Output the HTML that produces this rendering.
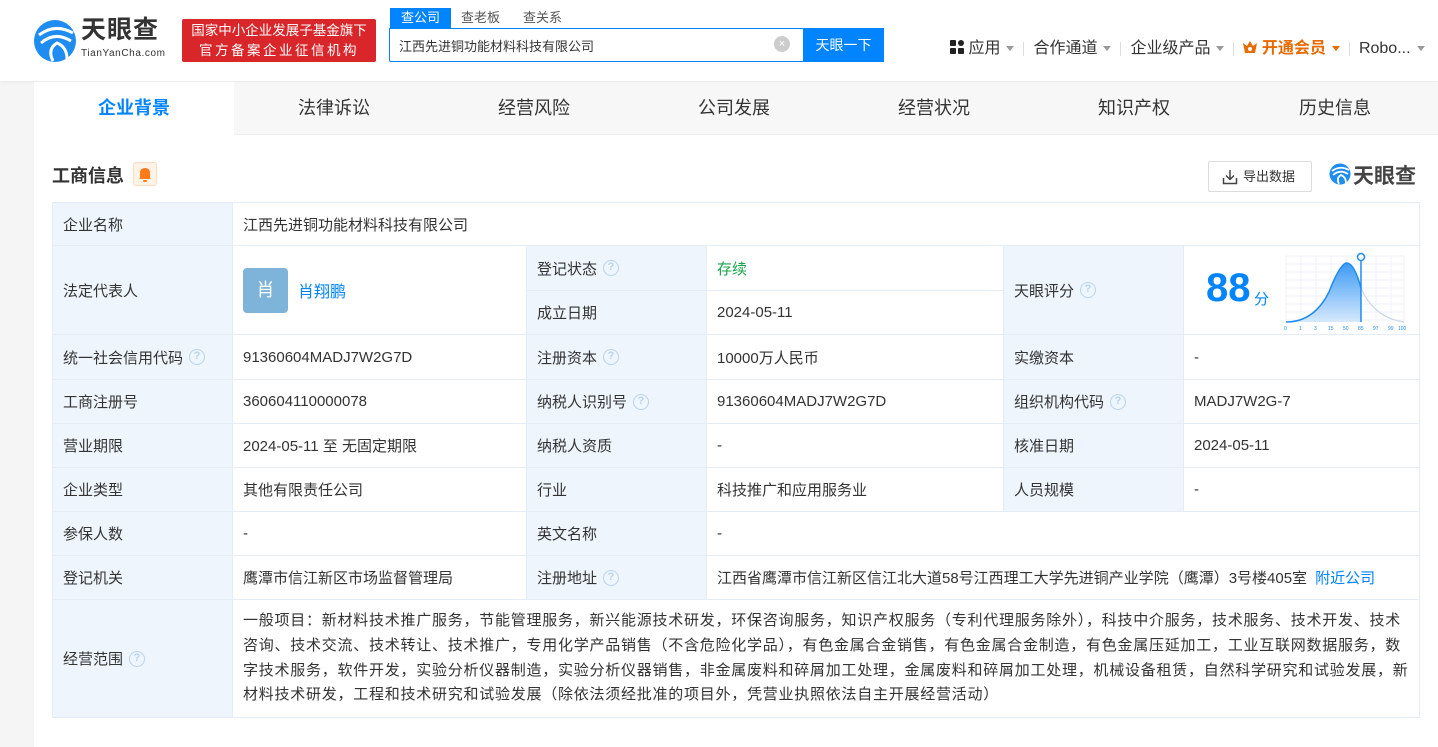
<!DOCTYPE html>
<html><head><meta charset="utf-8"><style>
*{margin:0;padding:0;box-sizing:border-box}
body{width:1438px;height:747px;overflow:hidden;background:#f5f5f6;font-family:"Liberation Sans","Noto Sans CJK SC",sans-serif;color:#333;position:relative}
.hdr{position:absolute;left:0;top:0;width:1438px;height:81px;background:#fff;box-shadow:0 1px 4px rgba(0,0,0,.06)}
.a{position:absolute}
.main{position:absolute;left:34px;top:82px;width:1404px;height:665px;background:#fff}
.tabs{position:absolute;left:34px;top:82px;width:1404px;height:53px;background:#f7f7f7;border-bottom:1px solid #eee}
.tab{position:absolute;top:82px;height:53px;line-height:52px;font-size:18px;color:#333;text-align:center;width:200px}
.c{position:absolute;border-right:1px solid #e4ecf5;border-bottom:1px solid #e4ecf5;font-size:15px;color:#333;display:flex;align-items:center;padding-left:10px;background:#fff}
.l{background:#eef5fc}
.q{display:inline-block;width:16px;height:16px;border:1.5px solid #b9d3ec;border-radius:50%;color:#b9d3ec;font-size:11px;line-height:13px;text-align:center;margin-left:6px;font-weight:bold}
.nav{font-size:16px;color:#333}
.tri{display:inline-block;width:0;height:0;border-left:4.5px solid transparent;border-right:4.5px solid transparent;border-top:5px solid #999;margin-left:6px;vertical-align:middle}
.sep{display:inline-block;width:1px;height:14px;background:#ddd;margin:0 9px;vertical-align:middle}
</style></head><body>
<div class="hdr"></div>
<svg class="a" style="left:33px;top:19px" width="44" height="44" viewBox="0 0 44 44">
<circle cx="22" cy="22" r="21" fill="#1e8cf0"/>
<path d="M6 16 Q22 4 40 14" stroke="#fff" stroke-width="3" fill="none"/>
<path d="M8 24 Q22 12 38 22" stroke="#fff" stroke-width="3" fill="none"/>
<path d="M20 42 Q14 30 24 24 Q34 28 34 40" stroke="#fff" stroke-width="3" fill="none"/>
</svg>
<div class="a" style="left:81px;top:15px;font-size:25px;line-height:30px;font-weight:bold;color:#333;letter-spacing:1px">天眼查</div>
<div class="a" style="left:81px;top:48px;font-size:10px;color:#333;letter-spacing:.6px">TianYanCha.com</div>
<div class="a" style="left:182px;top:19px;width:194px;height:43px;background:#d8262b;border-radius:2px;color:#fff;font-size:13.5px;line-height:20px;text-align:center;padding-top:2px">国家中小企业发展子基金旗下<br><span style="letter-spacing:2.5px">官方备案企业征信机构</span></div>
<div class="a" style="left:390px;top:8px;width:61px;height:20px;background:#0084ff;color:#fff;font-size:13px;text-align:center;line-height:20px">查公司</div>
<div class="a" style="left:461px;top:8px;font-size:13px;color:#555;line-height:20px">查老板</div>
<div class="a" style="left:523px;top:8px;font-size:13px;color:#555;line-height:20px">查关系</div>
<div class="a" style="left:389px;top:28px;width:495px;height:34px;border:1px solid #0084ff;border-radius:0 2px 2px 2px;background:#fff"></div>
<div class="a" style="left:399px;top:36px;font-size:13px;color:#333">江西先进铜功能材料科技有限公司</div>
<div class="a" style="left:774px;top:36px;width:16px;height:16px;border-radius:50%;background:#ccc;color:#fff;font-size:11px;text-align:center;line-height:16px">×</div>
<div class="a" style="left:803px;top:28px;width:81px;height:34px;background:#0084ff;color:#fff;font-size:14px;text-align:center;line-height:34px">天眼一下</div>
<div class="a nav" style="left:950px;top:34px;white-space:nowrap">
<svg width="14" height="14" viewBox="0 0 14 14" style="vertical-align:-1px"><rect x="0" y="0" width="6" height="6" rx="1" fill="#222"/><rect x="8" y="0" width="6" height="6" rx="3" fill="#222"/><rect x="0" y="8" width="6" height="6" rx="1" fill="#222"/><rect x="8" y="8" width="6" height="6" rx="1" fill="#222"/></svg>
应用<span class="tri"></span><span class="sep"></span>合作通道<span class="tri"></span><span class="sep"></span>企业级产品<span class="tri"></span><span class="sep"></span><span style="color:#e86b00;font-weight:bold"><svg width="14" height="12" viewBox="0 0 14 12" style="vertical-align:0"><path d="M0 2 L4 5 L7 0 L10 5 L14 2 L12 12 L2 12Z" fill="#e86b00"/><circle cx="7" cy="8" r="2" fill="#fff"/></svg> 开通会员</span><span class="tri" style="border-top-color:#e86b00"></span><span class="sep"></span>Robo...<span class="tri"></span></div>
<div class="main"></div>
<div class="tabs"></div>
<div class="tab" style="left:34px;background:#fff;color:#0084ff;font-weight:bold">企业背景</div>
<div class="tab" style="left:234px">法律诉讼</div>
<div class="tab" style="left:434px">经营风险</div>
<div class="tab" style="left:634px">公司发展</div>
<div class="tab" style="left:834px">经营状况</div>
<div class="tab" style="left:1034px">知识产权</div>
<div class="tab" style="left:1235px">历史信息</div>
<div class="a" style="left:52px;top:162px;font-size:18px;font-weight:bold;color:#333">工商信息</div>
<div class="a" style="left:133px;top:162px;width:24px;height:24px;background:#fff2e6;border:1px solid #fbdcc0;border-radius:3px"><svg width="22" height="22" viewBox="0 0 22 22"><path d="M6 15 L6 10 Q6 5 11 5 Q16 5 16 10 L16 15 L17 16 L5 16Z" fill="#ff7a1a"/><rect x="9" y="17" width="4" height="2" rx="1" fill="#ff7a1a"/></svg></div>
<div class="a" style="left:1208px;top:161px;width:104px;height:31px;border:1px solid #dcdcdc;border-radius:2px;font-size:13px;line-height:29px;padding-left:34px;color:#333">导出数据
<svg class="a" style="left:13px;top:7px" width="16" height="16" viewBox="0 0 16 16"><path d="M8 1 V10 M4 6.5 L8 10.5 L12 6.5 M1.5 9 V14.5 H14.5 V9" stroke="#444" stroke-width="1.5" fill="none"/></svg></div>
<svg class="a" style="left:1329px;top:163px" width="22" height="22" viewBox="0 0 22 22"><circle cx="11" cy="11" r="10.5" fill="#1e8cf0"/><path d="M3 8 Q11 2 20 7 M4 12 Q11 6 19 11 M10 21 Q7 15 12 12 Q17 14 17 20" stroke="#fff" stroke-width="1.8" fill="none"/></svg>
<div class="a" style="left:1353px;top:160px;font-size:21px;font-weight:bold;color:#444">天眼查</div>

<div class="a" style="left:52px;top:202px;width:1368px;height:516px;border-left:1px solid #e4ecf5;border-top:1px solid #e4ecf5"></div>
<div class="c l" style="left:53px;top:203px;width:180px;height:43px">企业名称</div>
<div class="c" style="left:233px;top:203px;width:1187px;height:43px">江西先进铜功能材料科技有限公司</div>

<div class="c l" style="left:53px;top:246px;width:180px;height:89px">法定代表人</div>
<div class="c" style="left:233px;top:246px;width:294px;height:89px"><span style="display:inline-block;width:45px;height:45px;background:#7eb3da;border-radius:4px;color:#fff;font-size:18px;text-align:center;line-height:45px">肖</span><span style="color:#0084ff;font-size:16px;margin-left:10px">肖翔鹏</span></div>
<div class="c l" style="left:527px;top:246px;width:180px;height:45px">登记状态<span class="q">?</span></div>
<div class="c" style="left:707px;top:246px;width:297px;height:45px;color:#16a34a">存续</div>
<div class="c l" style="left:527px;top:291px;width:180px;height:44px">成立日期</div>
<div class="c" style="left:707px;top:291px;width:297px;height:44px">2024-05-11</div>
<div class="c l" style="left:1004px;top:246px;width:180px;height:89px">天眼评分<span class="q">?</span></div>
<div class="c" style="left:1184px;top:246px;width:236px;height:89px;padding:0">
<span class="a" style="left:22px;top:20px;font-size:40px;font-weight:bold;color:#0084ff">88</span>
<span class="a" style="left:70px;top:42px;font-size:15px;color:#0084ff">分</span>
<svg class="a" style="left:100px;top:6px" width="122" height="80" viewBox="0 0 122 80">
<defs><linearGradient id="g" x1="0" y1="0" x2="0" y2="1"><stop offset="0" stop-color="#3d9af5"/><stop offset="1" stop-color="#d6e9fd"/></linearGradient></defs>
<g stroke="#eef2f7" stroke-width="1">
<path d="M2 4H120M2 12H120M2 20H120M2 28H120M2 36H120M2 44H120M2 52H120M2 60H120M2 68H120M2 4V70M17 4V70M32 4V70M47 4V70M62 4V70M77 4V70M92 4V70M107 4V70M120 4V70"/></g>
<path d="M2 70 Q30 70 45 40 Q55 14 62 11 Q70 10 77 36 L77 70Z" fill="url(#g)"/>
<path d="M2 70 Q30 70 45 40 Q55 14 62 11 Q70 10 77 36" stroke="#1e8cf0" stroke-width="1.5" fill="none"/>
<path d="M77 36 Q90 66 120 70" stroke="#c8d7e8" stroke-width="1.2" fill="none"/>
<line x1="77" y1="6" x2="77" y2="70" stroke="#1e8cf0" stroke-width="1.5"/>
<circle cx="77" cy="5" r="3.5" fill="#fff" stroke="#1e8cf0" stroke-width="1.5"/>
<g font-size="5" fill="#1e8cf0" font-family="Liberation Sans"><text x="0" y="78">0</text><text x="15" y="78">1</text><text x="30" y="78">3</text><text x="44" y="78">15</text><text x="59" y="78">50</text><text x="74" y="78">85</text><text x="89" y="78">97</text><text x="104" y="78">99</text><text x="114" y="78">100</text></g>
</svg></div>

<div class="c l" style="left:53px;top:335px;width:180px;height:45px">统一社会信用代码<span class="q">?</span></div>
<div class="c" style="left:233px;top:335px;width:294px;height:45px">91360604MADJ7W2G7D</div>
<div class="c l" style="left:527px;top:335px;width:180px;height:45px">注册资本<span class="q">?</span></div>
<div class="c" style="left:707px;top:335px;width:297px;height:45px">10000万人民币</div>
<div class="c l" style="left:1004px;top:335px;width:180px;height:45px">实缴资本</div>
<div class="c" style="left:1184px;top:335px;width:236px;height:45px">-</div>

<div class="c l" style="left:53px;top:380px;width:180px;height:44px">工商注册号</div>
<div class="c" style="left:233px;top:380px;width:294px;height:44px">360604110000078</div>
<div class="c l" style="left:527px;top:380px;width:180px;height:44px">纳税人识别号<span class="q">?</span></div>
<div class="c" style="left:707px;top:380px;width:297px;height:44px">91360604MADJ7W2G7D</div>
<div class="c l" style="left:1004px;top:380px;width:180px;height:44px">组织机构代码<span class="q">?</span></div>
<div class="c" style="left:1184px;top:380px;width:236px;height:44px">MADJ7W2G-7</div>

<div class="c l" style="left:53px;top:424px;width:180px;height:44px">营业期限</div>
<div class="c" style="left:233px;top:424px;width:294px;height:44px">2024-05-11 至 无固定期限</div>
<div class="c l" style="left:527px;top:424px;width:180px;height:44px">纳税人资质</div>
<div class="c" style="left:707px;top:424px;width:297px;height:44px">-</div>
<div class="c l" style="left:1004px;top:424px;width:180px;height:44px">核准日期</div>
<div class="c" style="left:1184px;top:424px;width:236px;height:44px">2024-05-11</div>

<div class="c l" style="left:53px;top:468px;width:180px;height:44px">企业类型</div>
<div class="c" style="left:233px;top:468px;width:294px;height:44px">其他有限责任公司</div>
<div class="c l" style="left:527px;top:468px;width:180px;height:44px">行业</div>
<div class="c" style="left:707px;top:468px;width:297px;height:44px">科技推广和应用服务业</div>
<div class="c l" style="left:1004px;top:468px;width:180px;height:44px">人员规模</div>
<div class="c" style="left:1184px;top:468px;width:236px;height:44px">-</div>

<div class="c l" style="left:53px;top:512px;width:180px;height:44px">参保人数</div>
<div class="c" style="left:233px;top:512px;width:294px;height:44px">-</div>
<div class="c l" style="left:527px;top:512px;width:180px;height:44px">英文名称</div>
<div class="c" style="left:707px;top:512px;width:713px;height:44px">-</div>

<div class="c l" style="left:53px;top:556px;width:180px;height:44px">登记机关</div>
<div class="c" style="left:233px;top:556px;width:294px;height:44px">鹰潭市信江新区市场监督管理局</div>
<div class="c l" style="left:527px;top:556px;width:180px;height:44px">注册地址<span class="q">?</span></div>
<div class="c" style="left:707px;top:556px;width:713px;height:44px;white-space:nowrap">江西省鹰潭市信江新区信江北大道58号江西理工大学先进铜产业学院（鹰潭）3号楼405室<span style="color:#0084ff;margin-left:8px">附近公司</span></div>

<div class="c l" style="left:53px;top:600px;width:180px;height:118px">经营范围<span class="q">?</span></div>
<div class="c" style="left:233px;top:600px;width:1187px;height:118px;line-height:24.7px;white-space:nowrap;letter-spacing:.75px">一般项目：新材料技术推广服务，节能管理服务，新兴能源技术研发，环保咨询服务，知识产权服务（专利代理服务除外），科技中介服务，技术服务、技术开发、技术<br>咨询、技术交流、技术转让、技术推广，专用化学产品销售（不含危险化学品），有色金属合金销售，有色金属合金制造，有色金属压延加工，工业互联网数据服务，数<br>字技术服务，软件开发，实验分析仪器制造，实验分析仪器销售，非金属废料和碎屑加工处理，金属废料和碎屑加工处理，机械设备租赁，自然科学研究和试验发展，新<br>材料技术研发，工程和技术研究和试验发展（除依法须经批准的项目外，凭营业执照依法自主开展经营活动）</div>
</body></html>
